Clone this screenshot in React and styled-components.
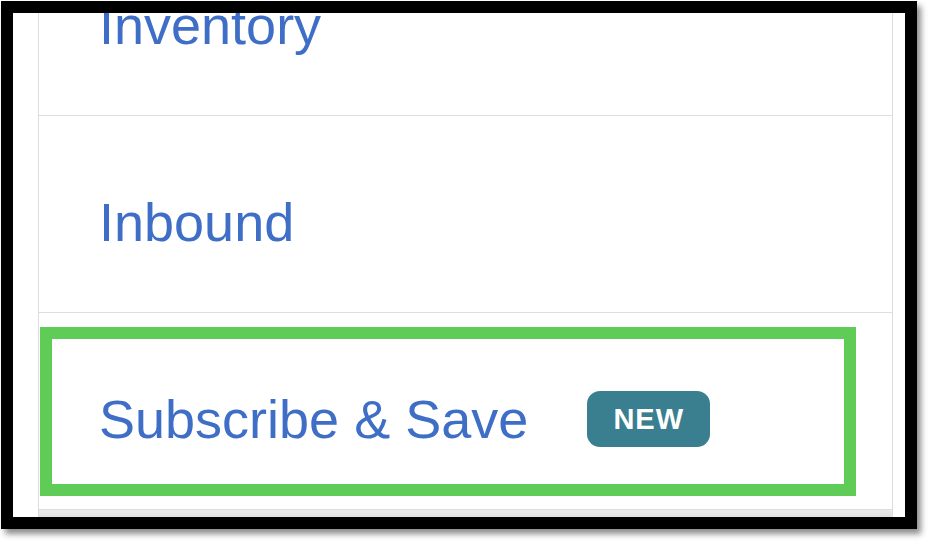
import React from "react";
import styled, { createGlobalStyle } from "styled-components";

const GlobalStyle = createGlobalStyle`
  html, body {
    margin: 0;
    padding: 0;
    background: #ffffff;
  }
  body {
    font-family: "Liberation Sans", Arial, sans-serif;
  }
`;

const Page = styled.div`
  width: 928px;
  height: 542px;
  padding: 1px 0 0 1px;
  box-sizing: border-box;
`;

const Frame = styled.div`
  width: 916px;
  height: 528px;
  box-sizing: border-box;
  border: 12px solid #000;
  background: #fff;
  overflow: hidden;
  box-shadow: 4px 5px 6px rgba(0, 0, 0, 0.45);
`;

const Panel = styled.div`
  display: flow-root;
  margin-left: 25px;
  width: 855px;
  height: 100%;
  box-sizing: border-box;
  border-left: 1px solid #dcdcdc;
  border-right: 1px solid #dcdcdc;
  background: linear-gradient(to bottom, #fff 0, #fff 494px, #ececec 496px, #e0e0e0 504px);
`;

const List = styled.ul`
  list-style: none;
  margin: -94px 0 0;
  padding: 0;
`;

const Row = styled.li`
  position: relative;
  height: 197px;
  box-sizing: border-box;
  border-bottom: 1px solid #dedede;
  background: #fff;
  display: flex;
  align-items: center;
  padding: 16px 0 0 60px;
`;

const Label = styled.a`
  font-size: 54px;
  line-height: 61px;
  color: #3f6ec6;
  text-decoration: none;
`;

const Badge = styled.span`
  margin-left: 59px;
  width: 123px;
  height: 56px;
  box-sizing: border-box;
  border-radius: 13px;
  background: #3a7f8f;
  color: #fff;
  font-size: 29px;
  font-weight: 700;
  letter-spacing: 1px;
  display: flex;
  align-items: center;
  justify-content: center;
`;

const Highlight = styled.div`
  position: absolute;
  left: 1px;
  top: 14px;
  width: 816px;
  height: 169px;
  box-sizing: border-box;
  border: 12px solid #5fcc58;
  pointer-events: none;
`;

const items = [
  { label: "Inventory" },
  { label: "Inbound" },
  { label: "Subscribe & Save", badge: "NEW", highlighted: true },
];

export default function App() {
  return (
    <>
      <GlobalStyle />
      <Page>
        <Frame>
          <Panel>
            <List>
              {items.map((item) => (
                <Row key={item.label}>
                  <Label href="#">{item.label}</Label>
                  {item.badge && <Badge>{item.badge}</Badge>}
                  {item.highlighted && <Highlight />}
                </Row>
              ))}
            </List>
          </Panel>
        </Frame>
      </Page>
    </>
  );
}
